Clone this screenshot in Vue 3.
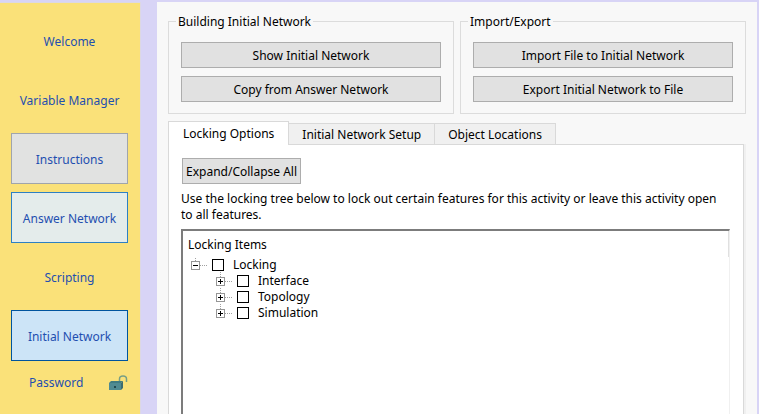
<script setup>
import { ref, reactive } from 'vue';

const navItems = [
    { label: 'Welcome', state: 'plain' },
    { label: 'Variable Manager', state: 'plain' },
    { label: 'Instructions', state: 'visited' },
    { label: 'Answer Network', state: 'hover' },
    { label: 'Scripting', state: 'plain' },
    { label: 'Initial Network', state: 'active' },
]

const groups = [
    { title: 'Building Initial Network', actions: ['Show Initial Network', 'Copy from Answer Network'] },
    { title: 'Import/Export', actions: ['Import File to Initial Network', 'Export Initial Network to File'] },
]

const tabs = ['Locking Options', 'Initial Network Setup', 'Object Locations']
let activeTab = ref(tabs[0]);

let isExpanded = ref(true);
let locking = ref(false);
let items = reactive([
    { label: 'Interface', checked: false },
    { label: 'Topology', checked: false },
    { label: 'Simulation', checked: false },
]);

const toggleTree = () => { isExpanded.value = !isExpanded.value }
</script>

<template>
    <div class="wizard">
        <nav class="sidebar">
            <button
                v-for="item in navItems"
                :key="item.label"
                class="nav-btn"
                :class="item.state"
            >
                {{ item.label }}
            </button>
            <div class="password">
                <button>Password</button>
                <svg class="lock" viewBox="0 0 20 16" aria-hidden="true">
                    <path d="M11.5 7V4Q11.5 1 15 1Q18.5 1 18.5 4V7" fill="none" stroke="#789f85" stroke-width="1.5" />
                    <path d="M1 8L3 6H15L13 8Z" fill="#3f7c82" />
                    <path d="M13 8L15 6V13L13 15Z" fill="#3c6c70" />
                    <path d="M1 8H13V15H1Z" fill="#4f8b92" />
                    <path d="M6 11H8V13H6Z" fill="#1f4a50" />
                </svg>
            </div>
        </nav>

        <main class="panel">
            <div class="groups">
                <fieldset v-for="group in groups" :key="group.title" class="group">
                    <legend>{{ group.title }}</legend>
                    <button v-for="action in group.actions" :key="action" class="btn">
                        {{ action }}
                    </button>
                </fieldset>
            </div>

            <div class="tabs" role="tablist">
                <button
                    v-for="tab in tabs"
                    :key="tab"
                    class="tab"
                    role="tab"
                    :class="{ selected: tab === activeTab }"
                    :aria-selected="tab === activeTab"
                    @click="activeTab = tab"
                >
                    {{ tab }}
                </button>
            </div>

            <section class="page">
                <button class="btn expand-btn" @click="toggleTree">Expand/Collapse All</button>
                <p class="hint">
                    Use the locking tree below to lock out certain features for this activity or leave this activity open to all features.
                </p>
                <div class="tree">
                    <div class="tree-header">Locking Items</div>
                    <div class="node root">
                        <button class="expander" aria-label="Toggle Locking" @click="toggleTree">
                            <span class="minus"></span>
                            <span v-if="!isExpanded" class="bar"></span>
                        </button>
                        <span class="branch"></span>
                        <label><input v-model="locking" type="checkbox" />Locking</label>
                    </div>
                    <ul v-show="isExpanded" class="children">
                        <li v-for="item in items" :key="item.label" class="node">
                            <button class="expander" :aria-label="'Toggle ' + item.label">
                                <span class="minus"></span>
                                <span class="bar"></span>
                            </button>
                            <span class="branch"></span>
                            <label><input v-model="item.checked" type="checkbox" />{{ item.label }}</label>
                        </li>
                    </ul>
                </div>
            </section>
        </main>
    </div>
</template>

<style>
body {
    background: #d8d4f6;
}
</style>

<style scoped>
.wizard {
    display: flex;
    gap: 16px;
    min-height: 100vh;
    box-sizing: border-box;
    padding: 2px 2px 0 0;
    font-family: "Noto Sans", Tahoma, sans-serif;
    font-size: 12px;
    line-height: 16px;
    color: #000;
}

button {
    font: inherit;
    color: inherit;
    padding: 0;
    border: none;
    background: none;
    box-sizing: border-box;
    cursor: pointer;
}

.sidebar {
    display: flex;
    flex-direction: column;
    gap: 8px;
    flex: none;
    width: 141px;
    box-sizing: border-box;
    padding: 12px 12px 0 11px;
    background: #fae179;
    border-top: 1px solid #dcd8e4;
    border-right: 1px solid #dcd8e4;
    color: #1f4fb0;
}

.nav-btn {
    height: 51px;
    padding-top: 2px;
    border: 1px solid transparent;
}

.nav-btn.visited {
    background: #e1e2e1;
    border-color: #a0a5ab;
}

.nav-btn.hover {
    background: #e4eceb;
    border-color: #2d80c4;
}

.nav-btn.active {
    background: #cce4f7;
    border-color: #00549e;
}

.password {
    display: flex;
    align-items: center;
    justify-content: space-between;
    height: 27px;
    padding-left: 18px;
}

.lock {
    width: 20px;
    height: 16px;
}

.panel {
    flex: 1;
    display: flex;
    flex-direction: column;
    min-width: 0;
    padding: 12px 11px 0;
    background: #f8f8f8;
}

.groups {
    display: flex;
    gap: 6px;
}

.group {
    flex: 1;
    display: flex;
    flex-direction: column;
    gap: 8px;
    min-width: 0;
    margin: 0;
    padding: 13px 12px 11px;
    border: 1px solid #dcdcdc;
}

.group legend {
    margin-left: -5px;
    padding: 1px 2px 0;
    line-height: 14px;
}

.btn {
    height: 26px;
    padding: 2px 3px 0;
    border: 1px solid #adadad;
    background: #e1e1e1;
}

.tabs {
    display: flex;
    align-items: flex-end;
    margin-top: 7px;
}

.tab {
    height: 21px;
    padding: 2px 13px 0;
    border: 1px solid #d9d9d9;
    border-width: 1px 1px 0 0;
    background: #f0f0f0;
}

.tab.selected {
    height: 24px;
    margin-bottom: -1px;
    padding: 0 14px;
    border-left-width: 1px;
    background: #fff;
    z-index: 1;
}

.page {
    flex: 1;
    display: flex;
    flex-direction: column;
    margin-right: 2px;
    padding: 13px 13px 0 12px;
    border: 1px solid #d9d9d9;
    border-bottom: none;
    background: #fff;
    box-shadow: 2px 0 0 #f0f0f0;
}

.expand-btn {
    align-self: flex-start;
    margin-left: 1px;
}

.hint {
    margin: 7px 0 6px;
}

.tree {
    flex: 1;
    padding-left: 5px;
    border: 2px solid #7c7c7c;
    border-right: 1px solid #f0f0f0;
    border-bottom: none;
}

.tree-header {
    padding: 6px 0 4px;
    border-right: 1px solid #e0e0e0;
}

.root {
    padding-left: 3px;
}

.children {
    margin: 0;
    padding: 0 0 0 28px;
    list-style: none;
}

.node {
    display: flex;
    align-items: center;
    height: 16px;
}

.expander {
    position: relative;
    display: grid;
    place-items: center;
    width: 9px;
    height: 9px;
    border: 1px solid #969696;
}

.expander::before {
    content: "";
    position: absolute;
    left: 3px;
    bottom: 8px;
    height: 5px;
    border-left: 1px dotted #a0a0a0;
}

.root .expander::before {
    height: 3px;
}

.minus,
.bar {
    grid-area: 1 / 1;
    width: 5px;
    height: 1px;
    background: #000;
}

.bar {
    width: 1px;
    height: 5px;
}

.branch {
    width: 7px;
    border-top: 1px dotted #a0a0a0;
}

.node label {
    display: flex;
    align-items: center;
    gap: 9px;
    margin-left: 5px;
}

.node input {
    appearance: none;
    width: 12px;
    height: 12px;
    margin: 0;
    border: 1px solid #000;
    background: #fff;
}

.node input:checked {
    background: #000;
    box-shadow: inset 0 0 0 2px #fff;
}
</style>
